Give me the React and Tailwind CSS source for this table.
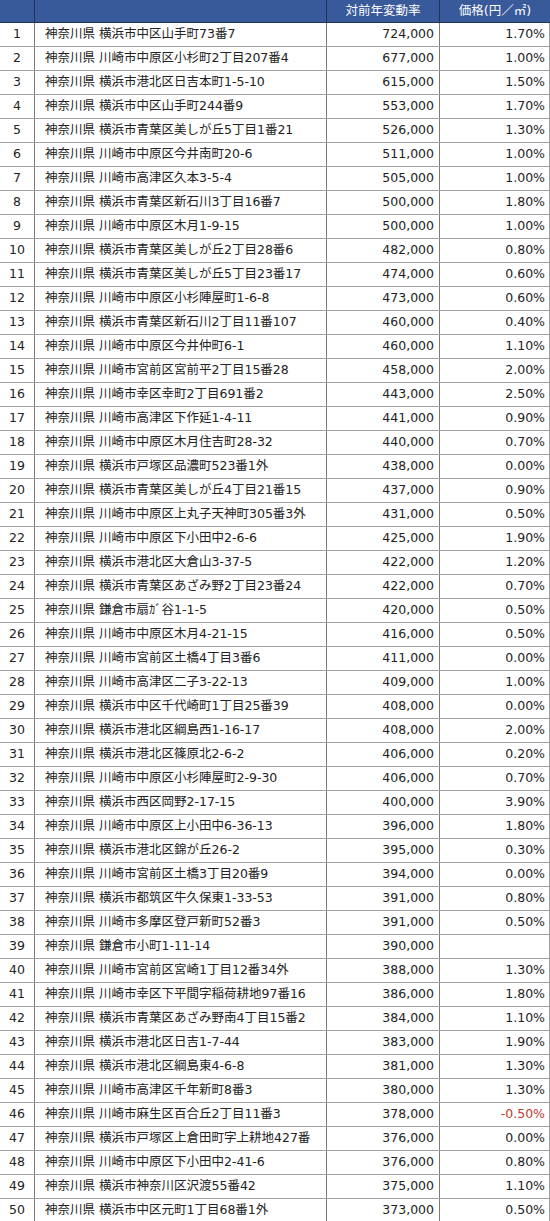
import React from "react";

const rows = [
  ["神奈川県 横浜市中区山手町73番7", "724,000", "1.70%"],
  ["神奈川県 川崎市中原区小杉町2丁目207番4", "677,000", "1.00%"],
  ["神奈川県 横浜市港北区日吉本町1-5-10", "615,000", "1.50%"],
  ["神奈川県 横浜市中区山手町244番9", "553,000", "1.70%"],
  ["神奈川県 横浜市青葉区美しが丘5丁目1番21", "526,000", "1.30%"],
  ["神奈川県 川崎市中原区今井南町20-6", "511,000", "1.00%"],
  ["神奈川県 川崎市高津区久本3-5-4", "505,000", "1.00%"],
  ["神奈川県 横浜市青葉区新石川3丁目16番7", "500,000", "1.80%"],
  ["神奈川県 川崎市中原区木月1-9-15", "500,000", "1.00%"],
  ["神奈川県 横浜市青葉区美しが丘2丁目28番6", "482,000", "0.80%"],
  ["神奈川県 横浜市青葉区美しが丘5丁目23番17", "474,000", "0.60%"],
  ["神奈川県 川崎市中原区小杉陣屋町1-6-8", "473,000", "0.60%"],
  ["神奈川県 横浜市青葉区新石川2丁目11番107", "460,000", "0.40%"],
  ["神奈川県 川崎市中原区今井仲町6-1", "460,000", "1.10%"],
  ["神奈川県 川崎市宮前区宮前平2丁目15番28", "458,000", "2.00%"],
  ["神奈川県 川崎市幸区幸町2丁目691番2", "443,000", "2.50%"],
  ["神奈川県 川崎市高津区下作延1-4-11", "441,000", "0.90%"],
  ["神奈川県 川崎市中原区木月住吉町28-32", "440,000", "0.70%"],
  ["神奈川県 横浜市戸塚区品濃町523番1外", "438,000", "0.00%"],
  ["神奈川県 横浜市青葉区美しが丘4丁目21番15", "437,000", "0.90%"],
  ["神奈川県 川崎市中原区上丸子天神町305番3外", "431,000", "0.50%"],
  ["神奈川県 川崎市中原区下小田中2-6-6", "425,000", "1.90%"],
  ["神奈川県 横浜市港北区大倉山3-37-5", "422,000", "1.20%"],
  ["神奈川県 横浜市青葉区あざみ野2丁目23番24", "422,000", "0.70%"],
  ["神奈川県 鎌倉市扇ｶﾞ谷1-1-5", "420,000", "0.50%"],
  ["神奈川県 川崎市中原区木月4-21-15", "416,000", "0.50%"],
  ["神奈川県 川崎市宮前区土橋4丁目3番6", "411,000", "0.00%"],
  ["神奈川県 川崎市高津区二子3-22-13", "409,000", "1.00%"],
  ["神奈川県 横浜市中区千代崎町1丁目25番39", "408,000", "0.00%"],
  ["神奈川県 横浜市港北区綱島西1-16-17", "408,000", "2.00%"],
  ["神奈川県 横浜市港北区篠原北2-6-2", "406,000", "0.20%"],
  ["神奈川県 川崎市中原区小杉陣屋町2-9-30", "406,000", "0.70%"],
  ["神奈川県 横浜市西区岡野2-17-15", "400,000", "3.90%"],
  ["神奈川県 川崎市中原区上小田中6-36-13", "396,000", "1.80%"],
  ["神奈川県 横浜市港北区錦が丘26-2", "395,000", "0.30%"],
  ["神奈川県 川崎市宮前区土橋3丁目20番9", "394,000", "0.00%"],
  ["神奈川県 横浜市都筑区牛久保東1-33-53", "391,000", "0.80%"],
  ["神奈川県 川崎市多摩区登戸新町52番3", "391,000", "0.50%"],
  ["神奈川県 鎌倉市小町1-11-14", "390,000", ""],
  ["神奈川県 川崎市宮前区宮崎1丁目12番34外", "388,000", "1.30%"],
  ["神奈川県 川崎市幸区下平間字稲荷耕地97番16", "386,000", "1.80%"],
  ["神奈川県 横浜市青葉区あざみ野南4丁目15番2", "384,000", "1.10%"],
  ["神奈川県 横浜市港北区日吉1-7-44", "383,000", "1.90%"],
  ["神奈川県 横浜市港北区綱島東4-6-8", "381,000", "1.30%"],
  ["神奈川県 川崎市高津区千年新町8番3", "380,000", "1.30%"],
  ["神奈川県 川崎市麻生区百合丘2丁目11番3", "378,000", "-0.50%"],
  ["神奈川県 横浜市戸塚区上倉田町字上耕地427番", "376,000", "0.00%"],
  ["神奈川県 川崎市中原区下小田中2-41-6", "376,000", "0.80%"],
  ["神奈川県 横浜市神奈川区沢渡55番42", "375,000", "1.10%"],
  ["神奈川県 横浜市中区元町1丁目68番1外", "373,000", "0.50%"],
];

const cols = "grid grid-cols-[35px_292px_113px_110px]";

export default function App() {
  return (
    <div
      className="w-[550px] bg-white text-[12.5px] text-[#222]"
      style={{ fontFamily: '"DejaVu Sans", "Noto Sans CJK JP", sans-serif' }}
    >
      <div className={`${cols} h-[23px] bg-[#38599a] text-white border-b border-[#1f3358]`}>
        <div className="border-r border-[#1f3358]" />
        <div className="border-r border-[#1f3358]" />
        <div className="border-r border-[#1f3358] flex items-center justify-center">
          対前年変動率
        </div>
        <div className="flex items-center justify-center">価格(円／㎡)</div>
      </div>
      {rows.map(([addr, price, pct], i) => (
        <div key={i} className={`${cols} h-[24px] border-b border-[#a0a0a0]`}>
          <div className="border-r border-[#7a7a7a] flex items-center justify-center">
            {i + 1}
          </div>
          <div className="border-r border-[#7a7a7a] flex items-center pl-[10px] whitespace-nowrap overflow-hidden">
            {addr}
          </div>
          <div className="border-r border-[#7a7a7a] flex items-center justify-end pr-[5px]">
            {price}
          </div>
          <div
            className={`border-r border-[#a0a0a0] flex items-center justify-end pr-[4px] ${
              pct.startsWith("-") ? "text-[#c0392b]" : ""
            }`}
          >
            {pct}
          </div>
        </div>
      ))}
    </div>
  );
}
